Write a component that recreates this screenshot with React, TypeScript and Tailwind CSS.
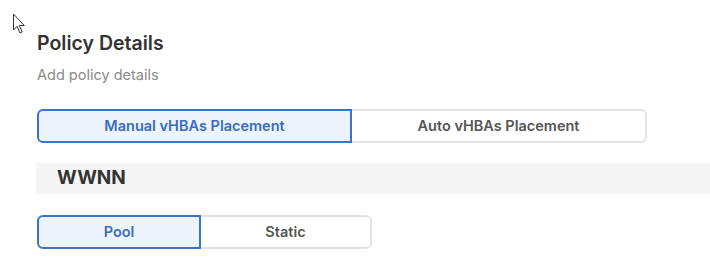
import React from "react";

export default function App() {
  return (
    <div className="relative w-[710px] h-[270px] bg-white overflow-hidden" style={{ fontFamily: "Inter, 'Noto Sans', sans-serif" }}>
      <svg className="absolute left-[12px] top-[13px]" width="15" height="22" viewBox="0 0 15 22">
        <path d="M1.5 1 L1.5 17 L5 13.3 L8 20 L10.2 19 L7.3 12.5 L12.3 12.5 Z" fill="white" stroke="#333" strokeWidth="1" strokeLinejoin="round" />
      </svg>
      <div className="pt-[30px]">
        <div className="pl-[37px]">
          <h1 className="text-[19.5px] font-semibold text-[#333] leading-[26px]">Policy Details</h1>
          <p className="mt-[9px] text-[14.5px] text-[#8a8a8a] leading-[20px]">Add policy details</p>
          <div className="mt-[24px] flex w-[610px] h-[34px]">
            <div className="w-[315px] flex items-center justify-center rounded-l-[6px] border-2 border-[#3d74c6] bg-[#eef4fe] text-[14.5px] font-semibold text-[#3a6cbf]">
              Manual vHBAs Placement
            </div>
            <div className="flex-1 flex items-center justify-center rounded-r-[6px] border-2 border-l-0 border-[#e3e3e3] bg-white text-[14.5px] font-semibold text-[#555]">
              Auto vHBAs Placement
            </div>
          </div>
        </div>
        <div className="ml-[36px] mt-[20px] h-[31px] bg-[#f5f5f5] flex items-center pl-[21px]">
          <span className="text-[19px] font-bold text-[#333]">WWNN</span>
        </div>
        <div className="pl-[37px] mt-[21px]">
          <div className="flex w-[335px] h-[34px]">
            <div className="w-[164px] flex items-center justify-center rounded-l-[6px] border-2 border-[#3d74c6] bg-[#eef4fe] text-[14.5px] font-semibold text-[#3a6cbf]">
              Pool
            </div>
            <div className="flex-1 flex items-center justify-center rounded-r-[6px] border-2 border-l-0 border-[#e3e3e3] bg-white text-[14.5px] font-semibold text-[#555]">
              Static
            </div>
          </div>
        </div>
      </div>
    </div>
  );
}
